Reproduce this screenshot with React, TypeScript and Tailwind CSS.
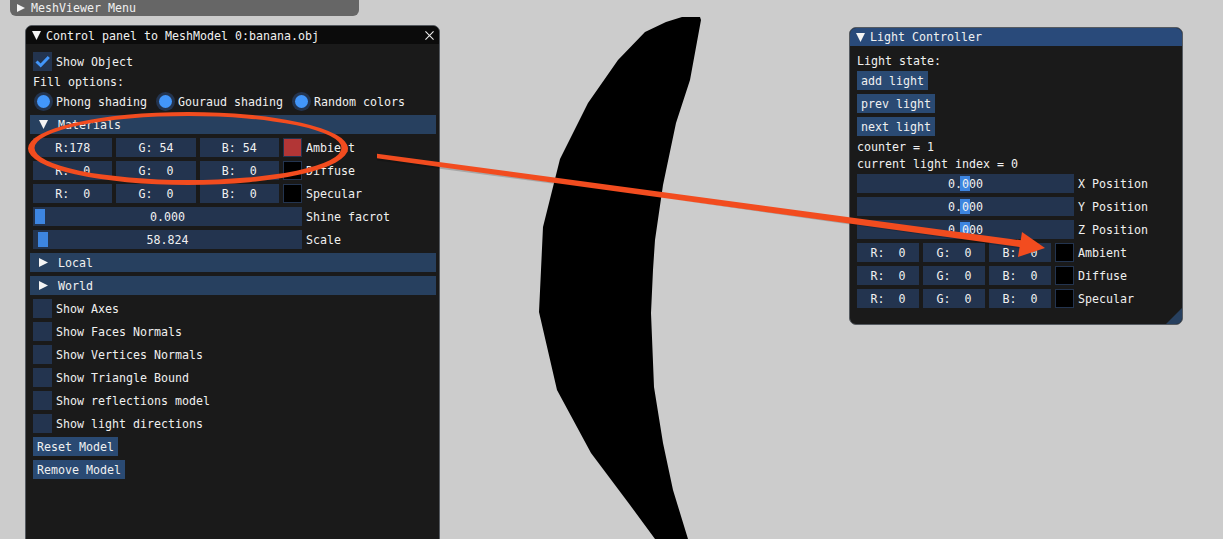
import { ReactNode } from 'react';

const FONT = 'font-["DejaVu_Sans_Mono",monospace] text-[11.63px] leading-[19px] whitespace-pre text-[#f0f0f0]';

function Tri({ dir, className }: { dir: 'right' | 'down'; className: string }) {
  return (
    <svg viewBox="0 0 10 10" className={`shrink-0 ${className}`}>
      <polygon points={dir === 'right' ? '0,0 10,5 0,10' : '0,0 10,0 5,10'} fill="#f4f4f4" />
    </svg>
  );
}

function Check({ on, label }: { on?: boolean; label: string }) {
  return (
    <div className="flex h-[19px] items-center gap-1">
      <div className="h-[19px] w-[19px] shrink-0 bg-[#23344f]">
        {on && (
          <svg viewBox="0 0 19 19" className="h-[19px] w-[19px]">
            <polyline points="3.5,9.5 7.7,13.5 15.8,5" fill="none" stroke="#4296fa" strokeWidth="3" />
          </svg>
        )}
      </div>
      <span className="translate-y-px">{label}</span>
    </div>
  );
}

function Radio({ label, className }: { label: string; className: string }) {
  return (
    <div className={`flex h-[19px] items-center gap-[3px] ${className}`}>
      <div className="flex h-[19px] w-[19px] items-center justify-center rounded-full bg-[#23344f]">
        <div className="h-[13px] w-[13px] rounded-full bg-[#4296fa]" />
      </div>
      <span className="translate-y-px">{label}</span>
    </div>
  );
}

function Header({ label, open }: { label: string; open?: boolean }) {
  return (
    <div className="-mx-[3px] flex h-[19px] items-center bg-[#27405f] pl-[9px]">
      <Tri dir={open ? 'down' : 'right'} className="h-[9px] w-[9px]" />
      <span className="ml-[10px] translate-y-px">{label}</span>
    </div>
  );
}

function Field({ children, className }: { children?: ReactNode; className: string }) {
  return <div className={`relative flex h-[19px] items-center justify-center bg-[#23344f] ${className}`}>{children}</div>;
}

function ColorRow({ r, g, b, swatch, label, cell }: { r: string; g: string; b: string; swatch: string; label: string; cell: string }) {
  return (
    <div className="flex h-[19px] items-center">
      <Field className={cell}><span className="translate-y-px">{`R:${r}`}</span></Field>
      <Field className={`ml-1 ${cell}`}><span className="translate-y-px">{`G:${g}`}</span></Field>
      <Field className={`ml-1 ${cell}`}><span className="translate-y-px">{`B:${b}`}</span></Field>
      <div className={`ml-1 h-[19px] w-[19px] border border-[#23344f] ${swatch}`} />
      <span className="ml-1 translate-y-px">{label}</span>
    </div>
  );
}

function SliderRow({ value, label, width, grab }: { value: string; label: string; width: string; grab: string }) {
  return (
    <div className="flex h-[19px] items-center">
      <Field className={width}>
        <div className={`absolute top-[2px] h-[15px] w-[10px] bg-[#3d85e0] ${grab}`} />
        <span className="relative translate-y-px">{value}</span>
      </Field>
      <span className="ml-1 translate-y-px">{label}</span>
    </div>
  );
}

function Btn({ label }: { label: string }) {
  return (
    <div className="h-[19px] w-fit bg-[#2a4a73] px-1">
      <span className="block translate-y-px">{label}</span>
    </div>
  );
}

function ControlPanel() {
  return (
    <div className={`absolute left-[25px] top-[25px] h-[530px] w-[415px] overflow-hidden rounded-t-[7px] border border-[#555a60] bg-[#1a1a1a] ${FONT}`}>
      <div className="flex h-[18px] items-center bg-[#0b0b0b] pl-[6px]">
        <Tri dir="down" className="h-[9px] w-[9px]" />
        <span className="ml-[5px] translate-y-px">Control panel to MeshModel 0:banana.obj</span>
        <svg viewBox="0 0 10 10" className="ml-auto mr-[5px] h-[9px] w-[9px]">
          <path d="M0.5 0.5 9.5 9.5M9.5 0.5 0.5 9.5" stroke="#eeeeee" strokeWidth="1.2" />
        </svg>
      </div>
      <div className="flex flex-col gap-1 pl-[7px] pr-[6px] pt-2">
        <Check on label="Show Object" />
        <div className="flex h-[13px] items-center"><span className="translate-y-px">Fill options:</span></div>
        <div className="flex">
          <Radio label="Phong shading" className="ml-px" />
          <Radio label="Gouraud shading" className="ml-[9px]" />
          <Radio label="Random colors" className="ml-[9px]" />
        </div>
        <Header label="Materials" open />
        <ColorRow r="178" g=" 54" b=" 54" swatch="bg-[#b23636]" label="Ambient" cell="w-[79.33px]" />
        <ColorRow r="  0" g="  0" b="  0" swatch="bg-black" label="Diffuse" cell="w-[79.33px]" />
        <ColorRow r="  0" g="  0" b="  0" swatch="bg-black" label="Specular" cell="w-[79.33px]" />
        <SliderRow value="0.000" label="Shine facrot" width="w-[269px]" grab="left-[2px]" />
        <SliderRow value="58.824" label="Scale" width="w-[269px]" grab="left-[5px]" />
        <Header label="Local" />
        <Header label="World" />
        <Check label="Show Axes" />
        <Check label="Show Faces Normals" />
        <Check label="Show Vertices Normals" />
        <Check label="Show Triangle Bound" />
        <Check label="Show reflections model" />
        <Check label="Show light directions" />
        <Btn label="Reset Model" />
        <Btn label="Remove Model" />
      </div>
    </div>
  );
}

function LightController() {
  return (
    <div className={`absolute left-[849px] top-[27px] h-[298px] w-[334px] overflow-hidden rounded-[7px] border border-[#555a60] bg-[#1a1a1a] ${FONT}`}>
      <div className="flex h-[18px] items-center bg-[#294a7a] pl-[6px]">
        <Tri dir="down" className="h-[9px] w-[9px]" />
        <span className="ml-[5px]">Light Controller</span>
      </div>
      <div className="flex flex-col gap-1 pl-[7px] pt-2">
        <div className="flex h-[13px] items-center"><span className="translate-y-px">Light state:</span></div>
        <Btn label="add light" />
        <Btn label="prev light" />
        <Btn label="next light" />
        <div className="flex h-[13px] items-center"><span className="translate-y-px">counter = 1</span></div>
        <div className="flex h-[13px] items-center"><span className="translate-y-px">current light index = 0</span></div>
        <SliderRow value="0.000" label="X Position" width="w-[217px]" grab="left-[103px]" />
        <SliderRow value="0.000" label="Y Position" width="w-[217px]" grab="left-[103px]" />
        <SliderRow value="0.000" label="Z Position" width="w-[217px]" grab="left-[103px]" />
        <ColorRow r="  0" g="  0" b="  0" swatch="bg-black" label="Ambient" cell="w-[62px]" />
        <ColorRow r="  0" g="  0" b="  0" swatch="bg-black" label="Diffuse" cell="w-[62px]" />
        <ColorRow r="  0" g="  0" b="  0" swatch="bg-black" label="Specular" cell="w-[62px]" />
      </div>
      <svg viewBox="0 0 16 16" className="absolute bottom-0 right-0 h-4 w-4">
        <polygon points="16,0 16,16 0,16" fill="#27405f" />
      </svg>
    </div>
  );
}

export default function App() {
  return (
    <div className="relative h-[539px] w-full overflow-hidden bg-[#cccccc]">
      {/* the mesh */}
      <svg viewBox="0 0 1223 539" className="absolute inset-0 h-[539px] w-[1223px]">
        <polygon
          fill="#000"
          points="700,17 682,17 666,22 645,32 618,60 588,103 560,159 543,227 541,270 539,312 557,390 591,453 630,505 655,539 688,539 673,490 663,443 654,387 651,313 653,270 655,240 663,185 676,123 690,80 701,20"
        />
      </svg>

      <div className={`absolute left-[10px] top-0 flex h-[16px] w-[349px] items-center rounded-b-[6px] bg-[#666666] pl-[7px] ${FONT}`}>
        <Tri dir="right" className="h-[10px] w-[8px]" />
        <span className="ml-[6px]">MeshViewer Menu</span>
      </div>

      <ControlPanel />
      <LightController />

      {/* annotation drawn on top of the screenshot */}
      <svg viewBox="0 0 1223 539" className="absolute inset-0 h-[539px] w-[1223px]">
        <path
          fillRule="evenodd"
          fill="#f24c1f"
          d="M28 148.5a160 36.5 0 1 0 320 0a160 36.5 0 1 0 -320 0ZM34.5 148a153.5 32 0 1 0 307 0a153.5 32 0 1 0 -307 0Z"
        />
        <polygon points="377,155.5 1030,248 1030,244 377,158.5" fill="#000" opacity="0.18" transform="translate(0 2)" />
        <polygon points="377,153.7 1030,241.5 1030,248.5 377,158.3" fill="#f24c1f" />
        <polygon points="1022,232 1045,248 1018,257" fill="#f24c1f" />
      </svg>
    </div>
  );
}
